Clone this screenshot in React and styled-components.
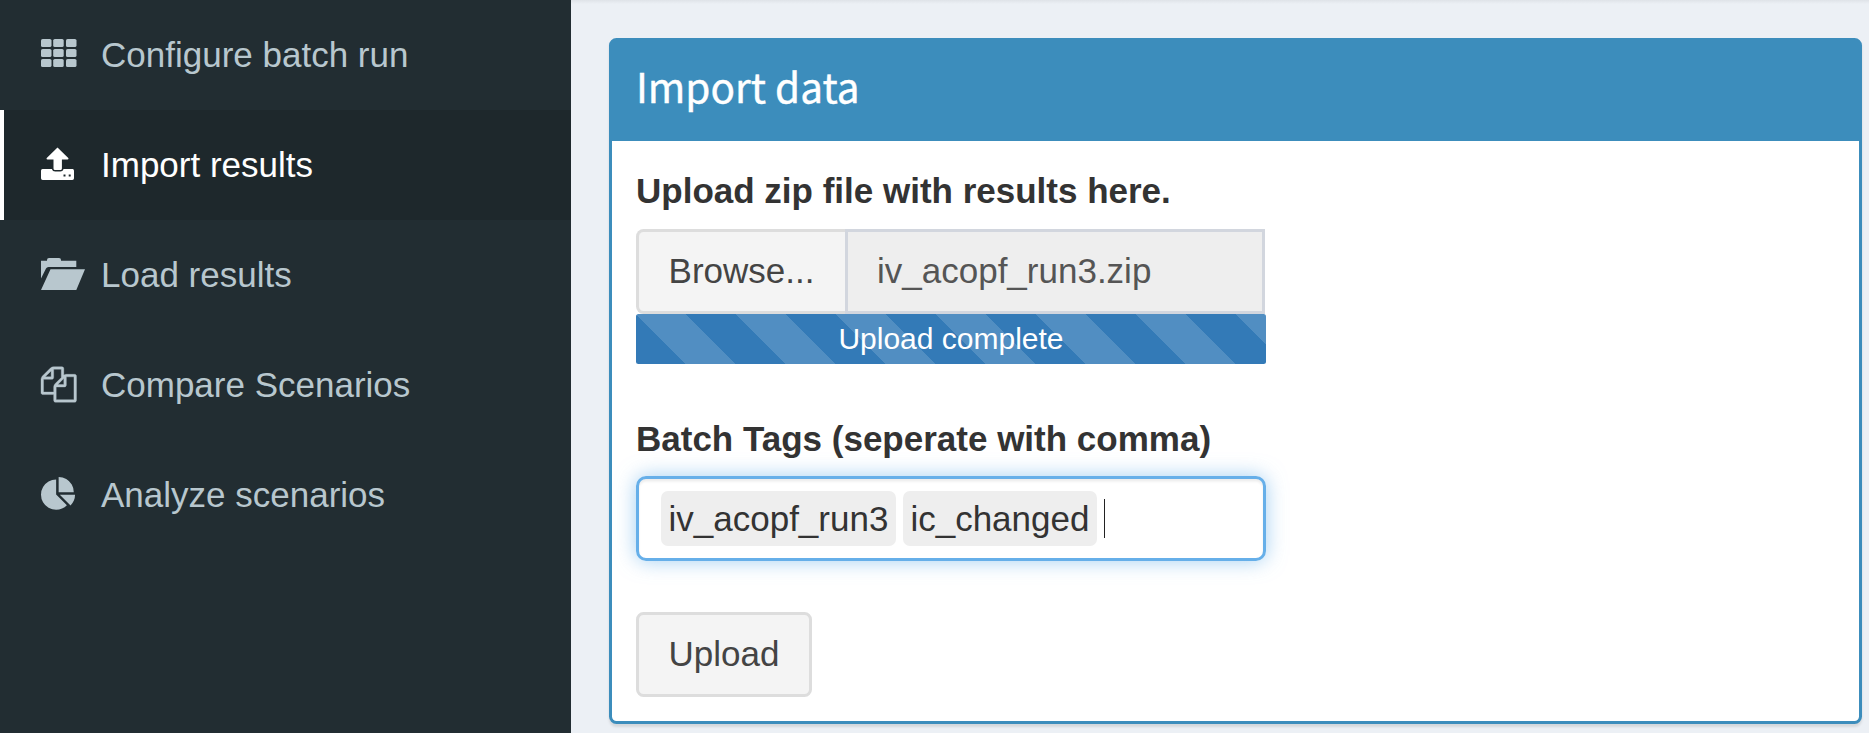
import React from 'react';
import styled, { createGlobalStyle } from 'styled-components';

const GlobalStyle = createGlobalStyle`
  * { box-sizing: border-box; }
  body { margin: 0; background: #ecf0f5; overflow: hidden; font: 35px/50px "Liberation Sans", Arial, sans-serif; color: #333; }
`;

const Page = styled.div`
  display: flex;
  width: 1869px;
  height: 733px;
  overflow: hidden;
`;

const Sidebar = styled.nav`
  width: 571px;
  flex: none;
  background: #222d32;
`;

const MenuItem = styled.a`
  display: flex;
  align-items: center;
  height: 110px;
  padding-left: ${(p) => (p.$active ? 36 : 40)}px;
  border-left: ${(p) => (p.$active ? '4px solid #fff' : '0')};
  background: ${(p) => (p.$active ? '#1e282c' : 'transparent')};
  color: ${(p) => (p.$active ? '#fff' : '#b8c7ce')};
`;

const Icon = styled.svg`
  width: 50px;
  height: 50px;
  margin-right: 11px;
  flex: none;
  fill: currentColor;
`;

const Content = styled.main`
  flex: 1;
  padding: 38px 7px 0 38px;
  background: linear-gradient(#dfe3e8, #ecf0f5 4px);
`;

const Box = styled.section`
  height: 686px;
  border: 3px solid #3c8dbc;
  border-radius: 7.5px;
  background: #fff;
  box-shadow: 0 2.5px 2.5px rgba(0, 0, 0, 0.1);
`;

const BoxHeader = styled.header`
  height: 100px;
  padding: 20px 24px 0;
  background: #3c8dbc;
  color: #fff;
`;

const Title = styled.h3`
  margin: 0;
  font: 400 40.5px/50px "Noto Sans CJK SC", sans-serif;
  -webkit-text-stroke: 0.4px currentColor;
`;

const BoxBody = styled.div`
  width: 655px;
  padding: 25px 0 0 24px;
`;

const Label = styled.label`
  display: block;
  height: 50px;
  margin-bottom: ${(p) => p.$gap}px;
  font-weight: 700;
  white-space: nowrap;
`;

const FileGroup = styled.div`
  display: flex;
  width: 629px;
  height: 85px;
`;

const Button = styled.button`
  width: ${(p) => p.$width}px;
  height: 85px;
  padding: 0 ${(p) => (p.$joined ? 1 : 0)}px 2px 0;
  border: 3px solid #ddd;
  border-right-width: ${(p) => (p.$joined ? 0 : 3)}px;
  border-radius: ${(p) => (p.$joined ? '7.5px 0 0 7.5px' : '7.5px')};
  background: #f4f4f4;
  color: #444;
  font: inherit;
`;

const FileName = styled.div`
  flex: 1;
  padding: 14px 0 0 29px;
  border: 3px solid #d2d6de;
  background: #eee;
  color: #555;
`;

const Progress = styled.div`
  width: 630px;
  height: 50px;
  margin-bottom: 50px;
  border-radius: 2.5px;
  background: #337ab7 linear-gradient(45deg, rgba(255, 255, 255, 0.15) 25%, transparent 25%, transparent 50%, rgba(255, 255, 255, 0.15) 50%, rgba(255, 255, 255, 0.15) 75%, transparent 75%) 0 0 / 100px 100px;
  color: #fff;
  font-size: 30px;
  text-align: center;
`;

const TagInput = styled.div`
  display: flex;
  align-items: center;
  gap: 7px;
  width: 630px;
  height: 85px;
  margin-bottom: 51px;
  padding-left: 22px;
  border: 3px solid #66afe9;
  border-radius: 10px;
  box-shadow: inset 0 2.5px 2.5px rgba(0, 0, 0, 0.075), 0 0 20px rgba(102, 175, 233, 0.6);
`;

const Tag = styled.span`
  height: 55px;
  padding: 3px 7.5px 0 7.5px;
  border-radius: 7px;
  background: #eee;
`;

const Caret = styled.span`
  width: 1px;
  height: 39px;
  background: #222;
`;

const icons = {
  grid: [1, 13.2, 26].flatMap((x) =>
    [9, 19, 29].map((y) => <rect key={`${x}-${y}`} x={x} y={y} width="10.5" height="8" rx="1.600" />)
  ),
  upload: (
    <path fillRule="evenodd" d="M17.5 7.5 28.500 18.200Q28.500 19.500 27.500 19.500H21.900V28.500q0 1.500-1.500 1.500h-5.400q-1.500 0-1.500-1.500V19.500H7.500Q6.500 19.500 6.500 18.200ZM2.500 29h9.300q.8 2.500 3.400 2.500h5q2.600 0 3.400-2.500h9q1.400 0 1.400 1.700v7.600q0 1.700-1.700 1.700H2.700Q1 40 1 38.300v-7.600Q1 29 2.500 29ZM23.500 34.500v2h2v-2ZM28.700 34.500v2h2v-2Z" />
  ),
  folder: (
    <path d="M1 10.700h6V10q0-2 2-2h10q2 0 2 2v.7h15.300V17H8.500Q6.700 17 6 18.500L1 28.500ZM10.500 19.300H45L36.300 40H1Z" />
  ),
  copy: (
    <path stroke="currentColor" strokeWidth="18" transform="translate(1 6.700) scale(.0198)" d="M1696 384q40 0 68 28t28 68v1216q0 40-28 68t-68 28h-960q-40 0-68-28t-28-68v-288h-544q-40 0-68-28t-28-68v-672q0-40 20-88t48-76l408-408q28-28 76-48t88-20h416q40 0 68 28t28 68v328q68-40 128-40h416zm-544 213l-299 299h299v-299zm-640-384l-299 299h299v-299zm196 647l316-316v-416h-384v416q0 40-28 68t-68 28h-416v640h512v-256q0-40 20-88t48-76zm956 804v-1152h-384v416q0 40-28 68t-68 28h-416v640h896z" />
  ),
  pie: (
    <path transform="translate(1 7) scale(.0197)" d="M768 890l546 546q-106 108-247.500 168t-298.500 60q-209 0-385.500-103t-279.500-279.500-103-385.500 103-385.500 279.500-279.500 385.500-103v762zm187 6h773q0 157-60 298.500t-168 247.500zm709-128h-768v-768q209 0 385.500 103t279.500 279.500 103 385.500z" />
  ),
};

const menu = [
  ['grid', 'Configure batch run'],
  ['upload', 'Import results'],
  ['folder', 'Load results'],
  ['copy', 'Compare Scenarios'],
  ['pie', 'Analyze scenarios'],
];

export default function App() {
  return (
    <Page>
      <GlobalStyle />
      <Sidebar>
        {menu.map(([icon, text]) => (
          <MenuItem key={icon} $active={icon === 'upload'}>
            <Icon viewBox="0 0 50 50">{icons[icon]}</Icon>
            {text}
          </MenuItem>
        ))}
      </Sidebar>
      <Content>
        <Box>
          <BoxHeader><Title>Import data</Title></BoxHeader>
          <BoxBody>
            <Label $gap={13}>Upload zip file with results here.</Label>
            <FileGroup>
              <Button $width={209} $joined>Browse...</Button>
              <FileName>iv_acopf_run3.zip</FileName>
            </FileGroup>
            <Progress>Upload complete</Progress>
            <Label $gap={12}>Batch Tags (seperate with comma)</Label>
            <TagInput>
              <Tag>iv_acopf_run3</Tag>
              <Tag>ic_changed</Tag>
              <Caret />
            </TagInput>
            <Button $width={176}>Upload</Button>
          </BoxBody>
        </Box>
      </Content>
    </Page>
  );
}
